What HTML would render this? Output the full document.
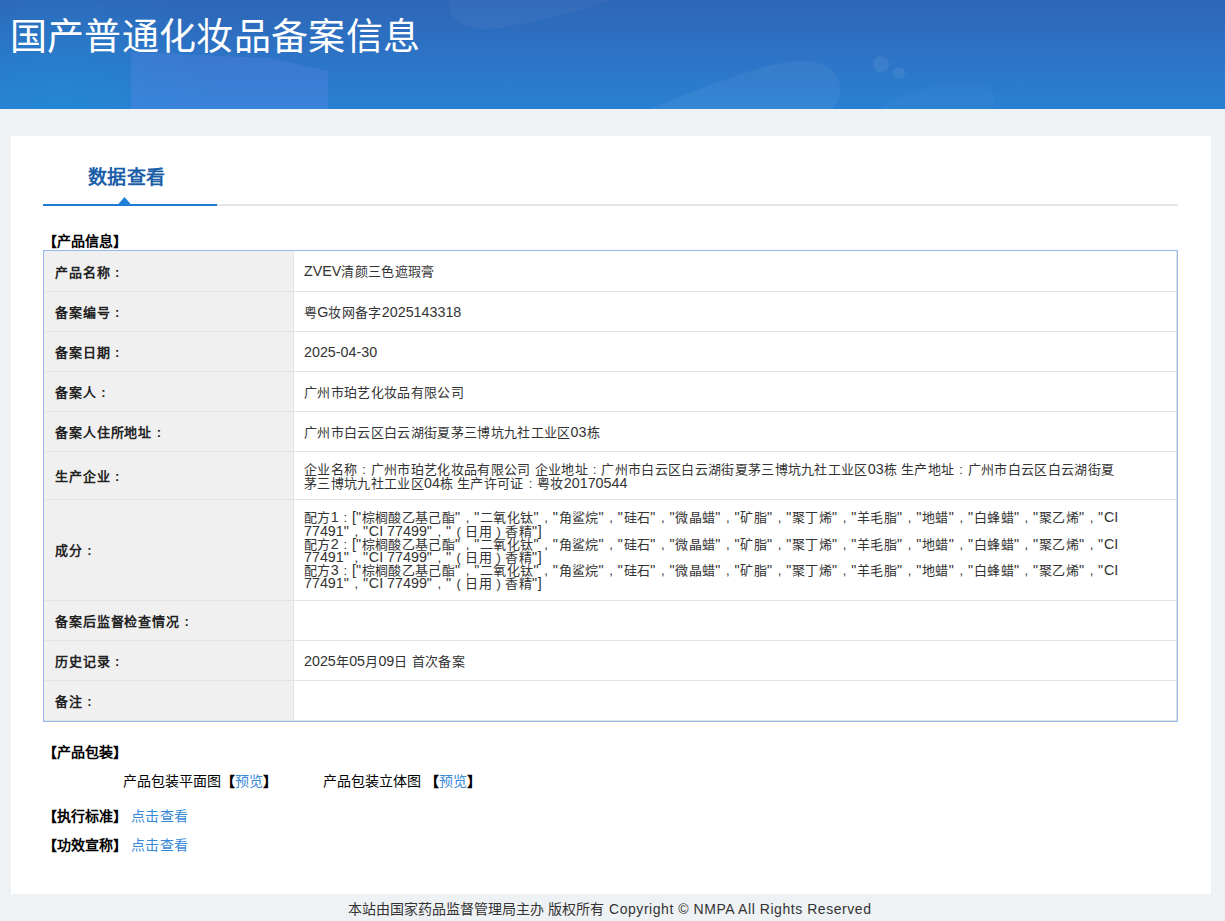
<!DOCTYPE html>
<html lang="zh-CN">
<head>
<meta charset="utf-8">
<style>
html,body{margin:0;padding:0;}
body{width:1225px;height:921px;overflow:hidden;background:#eff2f5;font-family:"Liberation Sans",sans-serif;color:#333;position:relative;}
#hd{position:absolute;left:0;top:0;width:1225px;height:109px;overflow:hidden;
background:linear-gradient(180deg,#2e66b6 0%,#2d73c6 50%,#2a80d2 100%);}
#hd .t{position:absolute;left:9.5px;top:13px;font-size:37px;letter-spacing:0.35px;line-height:50px;color:#fff;white-space:nowrap;}
#card{position:absolute;left:11px;top:136px;width:1200px;height:758px;background:#fff;}
.abs{position:absolute;white-space:nowrap;}
#tab{left:77px;top:28px;font-size:19px;letter-spacing:0.3px;font-weight:bold;color:#1c5fa9;line-height:28px;}
#gline{left:32px;top:68px;width:1135px;height:2px;background:#e5e5e5;}
#bline{left:32px;top:68px;width:174px;height:2px;background:#1f7ad3;}
#tri{left:100px;top:58px;}
.sec{font-size:14px;font-weight:bold;color:#000;line-height:16px;margin-top:1px;}
table.info{position:absolute;left:32px;top:114px;width:1135px;border-collapse:separate;border-spacing:0;border:1px solid #94b9ea;font-size:13px;}
table.info td{border-bottom:1px solid #e3e3e3;padding:0;vertical-align:middle;}
table.info td.l{width:238px;background:#f0f0f0;font-weight:bold;color:#222;padding-left:11px;border-right:1px solid #e3e3e3;}
table.info td.v{border-right:1px solid #e3e3e3;padding-left:10px;padding-top:2px;color:#333;line-height:13.2px;font-size:13px;letter-spacing:0.33px;}
i{font-style:normal;}
.n{font-size:14.3px;line-height:0;letter-spacing:0;}
.q{font-weight:normal;letter-spacing:0.78px;}
i.c,i.k{display:inline-block;width:13.33px;letter-spacing:0;text-align:center;font-family:"Liberation Sans",sans-serif;line-height:0;}
i.pl,i.pr{display:inline-block;width:13.33px;letter-spacing:0;text-align:center;line-height:0;}
table.info td.l{font-size:13px;letter-spacing:0.9px;padding-top:0;}
a{color:#3688d8;text-decoration:none;}
.sec a{letter-spacing:0.5px;}
#foot{position:absolute;left:0;top:899px;width:1225px;height:20px;font-size:14px;color:#333;line-height:20px;white-space:nowrap;}
</style>
</head>
<body>
<div id="hd"><svg width="1225" height="109" style="position:absolute;left:0;top:0">
<defs><radialGradient id="rg" cx="60" cy="109" r="160" gradientUnits="userSpaceOnUse"><stop offset="0" stop-color="#1a95d8" stop-opacity="0.35"/><stop offset="1" stop-color="#1a95d8" stop-opacity="0"/></radialGradient></defs><rect x="0" y="0" width="300" height="109" fill="url(#rg)"/>
<path d="M131 52 L270 58 L328 71 L328 109 L131 109 Z" fill="#7a8af8" fill-opacity="0.2"/>
<path d="M449 0 L612 0 C580 12 520 26 490 29 C465 31 452 20 449 8 Z" fill="#ffffff" fill-opacity="0.035"/>
<path d="M648 109 C700 90 760 62 800 61 C835 60 845 80 838 100 L832 109 Z" fill="#ffffff" fill-opacity="0.05"/>
<path d="M880 109 C900 90 950 80 985 86 C1000 92 995 105 990 109 Z" fill="#ffffff" fill-opacity="0.025"/>
<circle cx="881" cy="64" r="8" fill="#ffffff" fill-opacity="0.07"/>
<circle cx="899" cy="73" r="6" fill="#ffffff" fill-opacity="0.07"/>
</svg><div class="t">国产普通化妆品备案信息</div></div>
<div id="card">
  <div class="abs" id="tab">数据查看</div>
  <div class="abs" id="gline"></div>
  <div class="abs" id="bline"></div>
  <svg class="abs" id="tri" width="30" height="14"><polygon points="6.5,11 13.5,3 20.5,11" fill="#1f80d8"/></svg>
  <div class="abs sec" style="left:32px;top:96px;">【产品信息】</div>
  <table class="info">
<tr style="height:41px"><td class="l">产品名称<i class="k">:</i></td><td class="v"><span class="n">ZVEV</span>清颜三色遮瑕膏</td></tr>
<tr style="height:40px"><td class="l">备案编号<i class="k">:</i></td><td class="v">粤<span class="n">G</span>妆网备字<span class="n">2025143318</span></td></tr>
<tr style="height:40px"><td class="l">备案日期<i class="k">:</i></td><td class="v"><span class="n">2025-04-30</span></td></tr>
<tr style="height:40px"><td class="l">备案人<i class="k">:</i></td><td class="v">广州市珀艺化妆品有限公司</td></tr>
<tr style="height:40px"><td class="l">备案人住所地址<i class="k">:</i></td><td class="v">广州市白云区白云湖街夏茅三博坑九社工业区<span class="n">03</span>栋</td></tr>
<tr style="height:48px"><td class="l">生产企业<i class="k">:</i></td><td class="v">企业名称<i class="k">:</i>广州市珀艺化妆品有限公司 企业地址<i class="k">:</i>广州市白云区白云湖街夏茅三博坑九社工业区<span class="n">03</span>栋 生产地址<i class="k">:</i>广州市白云区白云湖街夏<br>茅三博坑九社工业区<span class="n">04</span>栋 生产许可证<i class="k">:</i>粤妆<span class="n">20170544</span></td></tr>
<tr style="height:101px"><td class="l" style="padding-bottom:2px">成分<i class="k">:</i></td><td class="v">配方<span class="n">1</span><i class="k">:</i><span class="n">[<b class="q">"</b></span>棕榈酸乙基己酯<span class="n"><b class="q">"</b></span><i class="c">,</i><span class="n"><b class="q">"</b></span>二氧化钛<span class="n"><b class="q">"</b></span><i class="c">,</i><span class="n"><b class="q">"</b></span>角鲨烷<span class="n"><b class="q">"</b></span><i class="c">,</i><span class="n"><b class="q">"</b></span>硅石<span class="n"><b class="q">"</b></span><i class="c">,</i><span class="n"><b class="q">"</b></span>微晶蜡<span class="n"><b class="q">"</b></span><i class="c">,</i><span class="n"><b class="q">"</b></span>矿脂<span class="n"><b class="q">"</b></span><i class="c">,</i><span class="n"><b class="q">"</b></span>聚丁烯<span class="n"><b class="q">"</b></span><i class="c">,</i><span class="n"><b class="q">"</b></span>羊毛脂<span class="n"><b class="q">"</b></span><i class="c">,</i><span class="n"><b class="q">"</b></span>地蜡<span class="n"><b class="q">"</b></span><i class="c">,</i><span class="n"><b class="q">"</b></span>白蜂蜡<span class="n"><b class="q">"</b></span><i class="c">,</i><span class="n"><b class="q">"</b></span>聚乙烯<span class="n"><b class="q">"</b></span><i class="c">,</i><span class="n"><b class="q">"</b>CI</span><br><span class="n">77491<b class="q">"</b></span><i class="c">,</i><span class="n"><b class="q">"</b>CI 77499<b class="q">"</b></span><i class="c">,</i><span class="n"><b class="q">"</b></span><i class="pl">(</i>日用<i class="pr">)</i>香精<span class="n"><b class="q">"</b>]</span><br>配方<span class="n">2</span><i class="k">:</i><span class="n">[<b class="q">"</b></span>棕榈酸乙基己酯<span class="n"><b class="q">"</b></span><i class="c">,</i><span class="n"><b class="q">"</b></span>二氧化钛<span class="n"><b class="q">"</b></span><i class="c">,</i><span class="n"><b class="q">"</b></span>角鲨烷<span class="n"><b class="q">"</b></span><i class="c">,</i><span class="n"><b class="q">"</b></span>硅石<span class="n"><b class="q">"</b></span><i class="c">,</i><span class="n"><b class="q">"</b></span>微晶蜡<span class="n"><b class="q">"</b></span><i class="c">,</i><span class="n"><b class="q">"</b></span>矿脂<span class="n"><b class="q">"</b></span><i class="c">,</i><span class="n"><b class="q">"</b></span>聚丁烯<span class="n"><b class="q">"</b></span><i class="c">,</i><span class="n"><b class="q">"</b></span>羊毛脂<span class="n"><b class="q">"</b></span><i class="c">,</i><span class="n"><b class="q">"</b></span>地蜡<span class="n"><b class="q">"</b></span><i class="c">,</i><span class="n"><b class="q">"</b></span>白蜂蜡<span class="n"><b class="q">"</b></span><i class="c">,</i><span class="n"><b class="q">"</b></span>聚乙烯<span class="n"><b class="q">"</b></span><i class="c">,</i><span class="n"><b class="q">"</b>CI</span><br><span class="n">77491<b class="q">"</b></span><i class="c">,</i><span class="n"><b class="q">"</b>CI 77499<b class="q">"</b></span><i class="c">,</i><span class="n"><b class="q">"</b></span><i class="pl">(</i>日用<i class="pr">)</i>香精<span class="n"><b class="q">"</b>]</span><br>配方<span class="n">3</span><i class="k">:</i><span class="n">[<b class="q">"</b></span>棕榈酸乙基己酯<span class="n"><b class="q">"</b></span><i class="c">,</i><span class="n"><b class="q">"</b></span>二氧化钛<span class="n"><b class="q">"</b></span><i class="c">,</i><span class="n"><b class="q">"</b></span>角鲨烷<span class="n"><b class="q">"</b></span><i class="c">,</i><span class="n"><b class="q">"</b></span>硅石<span class="n"><b class="q">"</b></span><i class="c">,</i><span class="n"><b class="q">"</b></span>微晶蜡<span class="n"><b class="q">"</b></span><i class="c">,</i><span class="n"><b class="q">"</b></span>矿脂<span class="n"><b class="q">"</b></span><i class="c">,</i><span class="n"><b class="q">"</b></span>聚丁烯<span class="n"><b class="q">"</b></span><i class="c">,</i><span class="n"><b class="q">"</b></span>羊毛脂<span class="n"><b class="q">"</b></span><i class="c">,</i><span class="n"><b class="q">"</b></span>地蜡<span class="n"><b class="q">"</b></span><i class="c">,</i><span class="n"><b class="q">"</b></span>白蜂蜡<span class="n"><b class="q">"</b></span><i class="c">,</i><span class="n"><b class="q">"</b></span>聚乙烯<span class="n"><b class="q">"</b></span><i class="c">,</i><span class="n"><b class="q">"</b>CI</span><br><span class="n">77491<b class="q">"</b></span><i class="c">,</i><span class="n"><b class="q">"</b>CI 77499<b class="q">"</b></span><i class="c">,</i><span class="n"><b class="q">"</b></span><i class="pl">(</i>日用<i class="pr">)</i>香精<span class="n"><b class="q">"</b>]</span></td></tr>
<tr style="height:40px"><td class="l">备案后监督检查情况<i class="k">:</i></td><td class="v"></td></tr>
<tr style="height:40px"><td class="l">历史记录<i class="k">:</i></td><td class="v"><span class="n">2025</span>年<span class="n">05</span>月<span class="n">09</span>日 首次备案</td></tr>
<tr style="height:40px"><td class="l">备注<i class="k">:</i></td><td class="v"></td></tr>
</table>
  <div class="abs sec" style="left:32px;top:607px;">【产品包装】</div>
  <div class="abs" style="left:112px;top:637px;font-size:14px;color:#000;line-height:16px;">产品包装平面图<b>【</b><a>预览</a><b>】</b></div>
  <div class="abs" style="left:312px;top:637px;font-size:14px;color:#000;line-height:16px;">产品包装立体图 <b>【</b><a>预览</a><b>】</b></div>
  <div class="abs sec" style="left:32px;top:671px;">【执行标准】 <a style="font-weight:normal">点击查看</a></div>
  <div class="abs sec" style="left:32px;top:700px;">【功效宣称】 <a style="font-weight:normal">点击查看</a></div>
</div>
<div id="foot"><span style="position:absolute;left:348px;">本站由国家药品监督管理局主办</span><span style="position:absolute;left:548px;">版权所有</span><span style="position:absolute;left:609px;letter-spacing:0.55px;">Copyright © NMPA All Rights Reserved</span></div>
</body>
</html>
